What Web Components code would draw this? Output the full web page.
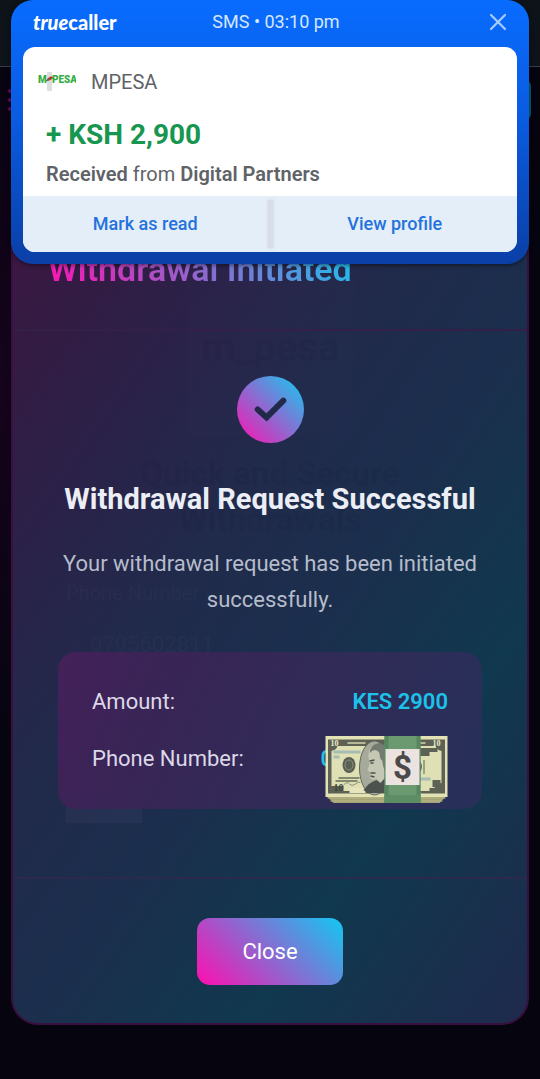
<!DOCTYPE html>
<html lang="en">
<head>
<meta charset="utf-8">
<meta name="viewport" content="width=device-width, initial-scale=1">
<title>Withdrawal Initiated</title>
<style>
  body { margin: 0; background: #05040f; font-family: Roboto, "Liberation Sans", sans-serif; }
</style>
</head>
<body>
<wallet-screen>
  <site-backdrop slot="backdrop"></site-backdrop>
  <wallet-dialog slot="dialog">
    <span slot="title">Withdrawal Initiated</span>
    <success-message>
      <span slot="heading">Withdrawal Request Successful</span>
      Your withdrawal request has been initiated successfully.
    </success-message>
    <detail-card>
      <detail-row label="Amount:">KES 2900</detail-row>
      <detail-row label="Phone Number:">0<cash-stack></cash-stack></detail-row>
    </detail-card>
    <gradient-button slot="footer">Close</gradient-button>
  </wallet-dialog>
  <caller-banner slot="banner"></caller-banner>
</wallet-screen>

<script>
const define = (name, markup, setup) => {
  const template = document.createElement('template');
  template.innerHTML = markup;
  customElements.define(name, class extends HTMLElement {
    constructor() {
      super();
      this.attachShadow({ mode: 'open' }).append(template.content.cloneNode(true));
    }
    connectedCallback() { if (setup) setup(this, this.shadowRoot); }
  });
};

define('wallet-screen', `
  <style>
    :host { display: grid; grid-template-columns: minmax(0, 1fr); min-height: 100vh; }
    ::slotted(*) { grid-area: 1 / 1; }
    ::slotted(wallet-dialog) { align-self: start; margin: 210px 11px 53px; }
    ::slotted(caller-banner) { align-self: start; margin: 0 11px; z-index: 2; }
  </style>
  <slot name="backdrop"></slot><slot name="dialog"></slot><slot name="banner"></slot>`);

define('site-backdrop', `
  <style>
    :host { display: block; background: radial-gradient(ellipse 40px 380px at 0 36%, #16031c, #05040f); }
    .bar { height: 66px; background: #0d1319; border-bottom: 1px solid #3b3f45; }
    .nav { display: flex; justify-content: space-between; align-items: center; padding: 13px 9px 0 8px; }
    .menu { width: 24px; display: grid; gap: 5px; }
    .menu i { height: 4px; border-radius: 2px; background: #6e0a5c; }
    .account { width: 90px; height: 40px; border-radius: 6px; background: #0c5c74; }
  </style>
  <div class="bar"></div>
  <div class="nav"><div class="menu"><i></i><i></i><i></i></div><div class="account"></div></div>`);

define('wallet-dialog', `
  <style>
    :host {
      display: block; position: relative; box-sizing: border-box; overflow: hidden;
      border: 2px solid #3a1040; border-radius: 27px;
      background: linear-gradient(125deg, #401644 0%, #351a42 8%, #2a2249 24%, #212a4b 38%, #1c2e4d 53%, #10384e 74%, #1f2a4c 100%);
    }
    header { padding: 37px 35px 40px; border-bottom: 2px solid #341f48; }
    h1 {
      margin: 0; width: fit-content; font-size: 34px; line-height: 40px; font-weight: 600;
      background: linear-gradient(45deg, #ff10b0, #18c4ee);
      -webkit-background-clip: text; background-clip: text; color: transparent;
    }
    .body { padding: 45px 45px 68px; display: grid; gap: 34px; }
    footer { padding: 39px 39px 38px; border-top: 2px solid #2c2a4c; display: flex; justify-content: center; }
    header, .body, footer { position: relative; }
    page-shadow { position: absolute; inset: 0; }
  </style>
  <page-shadow aria-hidden="true"></page-shadow>
  <header><h1><slot name="title"></slot></h1></header>
  <div class="body"><slot></slot></div>
  <footer><slot name="footer"></slot></footer>`);

define('page-shadow', `
  <style>
    :host { display: block; color: rgba(70, 70, 110, .16); padding: 30px 53px 0; }
    .logo { box-sizing: border-box; width: 168px; height: 194px; padding-top: 82px; margin: 0 auto; background: rgba(50, 60, 100, .07);
      text-align: center; font: 700 40px/48px Roboto, sans-serif; color: rgba(24, 24, 54, .14); }
    .title { margin: 15px 0 0; text-align: center; font-size: 33px; line-height: 46px; font-weight: 700; color: rgba(24, 24, 54, .14); }
    .line { font-size: 20px; line-height: 24px; }
    .name { margin-top: 38px; }
    .value { margin: 28px 0 0 24px; font-size: 22px; }
    .amount { margin-top: 76px; }
    .field { margin-top: 14px; display: flex; align-items: center; gap: 26px; font-size: 22px; }
    .unit { width: 76px; height: 52px; line-height: 52px; text-align: center; background: rgba(70, 70, 110, .2); }
  </style>
  <div class="logo">m_pesa</div>
  <div class="title">Quick and Secure<br>Withdrawals</div>
  <div class="line name">Phone Number</div>
  <div class="line value">0795602811</div>
  <div class="line amount">Amount (KES)</div>
  <div class="field"><span class="unit">KES</span><span>2900</span></div>`);

define('success-message', `
  <style>
    :host { display: flex; flex-direction: column; align-items: center; text-align: center; color: #b6bccb; font-size: 22px; line-height: 36px; }
    svg { width: 67px; height: 67px; }
    h2 { margin: 38px 0 29px; font-size: 29px; line-height: 36px; font-weight: 700; color: #eceef5; white-space: nowrap; }
    p { margin: 0; }
  </style>
  <svg viewBox="0 0 68 68" aria-hidden="true">
    <defs><linearGradient id="g" x1="0" y1="1" x2="1" y2="0"><stop offset=".05" stop-color="#f31ab4"/><stop offset=".95" stop-color="#1cc4f0"/></linearGradient></defs>
    <circle cx="34" cy="34" r="34" fill="url(#g)"/>
    <path d="M21 34 L30 42 L47 25" fill="none" stroke="#212a4b" stroke-width="6" stroke-linecap="round" stroke-linejoin="miter"/>
  </svg>
  <h2><slot name="heading"></slot></h2>
  <p><slot></slot></p>`);

define('detail-card', `
  <style>
    :host { display: grid; gap: 21px; padding: 32px 34px; border-radius: 18px;
      background: linear-gradient(115deg, #46205af0 0%, #3b2457e6 25%, #342a58e6 55%, #28305af0 100%); }
  </style>
  <slot></slot>`);

define('detail-row', `
  <style>
    :host { display: flex; justify-content: space-between; font-size: 22px; line-height: 36px; color: #dcd8e8; }
    .value { display: flex; font-weight: 600; color: #1cc2ea; }
  </style>
  <span class="label"></span><span class="value"><slot></slot></span>`,
  (host, root) => { root.querySelector('.label').textContent = host.getAttribute('label'); });

define('cash-stack', `
  <style>
    :host { display: block; width: 123px; height: 36px; margin-left: -8px; position: relative; }
    svg { position: absolute; right: 0; top: -5px; width: 123px; height: 68px; }
  </style>
  <svg viewBox="0 0 122 68" role="img" aria-label="Cash">
    <path d="M0 59 L8 67 H114 L122 59Z" fill="#a5a477"/>
    <path d="M2 62 H120 M5 65 H117" stroke="#b8b585" stroke-width="1"/>
    <rect width="122" height="61" fill="#e3e2b5"/>
    <rect x="2.500" y="3.500" width="117" height="54" fill="#5d6254"/>
    <path d="M12 10 H110 Q111 14 116 15 V47 Q110 48 109 52 H104 V55 H18 V50 H6 V15 Q11 14 12 10Z" fill="#dfe1b4"/>
    <path d="M22 7 H40 M75 7 H100" stroke="#b6b998" stroke-width="2"/>
    <path d="M8 16 H35 M8 21 H14 M94 43 H105" stroke="#a7bdb4" stroke-width="3"/>
    <ellipse cx="23.500" cy="29" rx="6.500" ry="8" fill="#5b6055"/>
    <ellipse cx="23.500" cy="29" rx="4" ry="5" fill="none" stroke="#8b9080"/>
    <path d="M13 42 H34 M10 45 H32" stroke="#676b5b" stroke-width="1.500"/>
    <path d="M18 49 q4 -4 6 -1 t6 0 t5 -1" fill="none" stroke="#8c907a"/>
    <path d="M24 52 H40 V57 H24Z" fill="#e6e5bc"/>
    <ellipse cx="49" cy="32" rx="15" ry="27" fill="#a6aa9b" stroke="#62675c"/>
    <path d="M43 21 Q42 10 51 9 Q60 7 62 15 V43 L55 47 L51 43 Q45 45 44 40 L45 37 L42 34 L44 28Z" fill="#c3c7b4"/>
    <path d="M44 17 Q45 8 54 7 Q62 9 62 20 V38 Q57 33 57 25 Q54 23 54 17 Q50 11 44 17Z" fill="#747b70"/>
    <path d="M44 25 L49 24 M45 27 L48 27 M45 37 L50 37 M45 40 L49 41" stroke="#4d5249" stroke-width="1.500"/>
    <path d="M38 54 Q44 46 51 44 L55 47 L62 39 V57 H42Z" fill="#4c524d"/>
    <path d="M94 12 H112 V16 H104 V20 H94Z M94 25 Q99 30 94 37Z M98 24 H99 V38 H98Z M107 44 H115 V51 H107Z" fill="#5c6254"/>
    <text x="5" y="10" font-family="Liberation Serif, serif" font-size="8" font-weight="700" fill="#f0eecb">10</text>
    <text x="107" y="10" font-family="Liberation Serif, serif" font-size="8" font-weight="700" fill="#f0eecb">10</text>
    <text x="8" y="55" font-family="Liberation Serif, serif" font-size="10" font-weight="700" fill="#3f453c">10</text>
    <rect x="59" width="36" height="67" fill="#6b9970"/>
    <rect x="59" width="4" height="67" fill="#568560"/><rect x="91" width="4" height="67" fill="#568560"/>
    <path d="M59 59 H95 V67 H59Z" fill="#5c8d65"/>
    <rect x="60" y="13" width="34" height="36" fill="#ebe3df"/>
    <text x="77" y="43" text-anchor="middle" font-family="Roboto, sans-serif" font-size="33" font-weight="700" fill="#4a4a4a">$</text>
  </svg>`);

define('gradient-button', `
  <style>
    :host { display: block; }
    button { display: block; box-sizing: border-box; height: 67px; padding: 0 45px; border: 0; border-radius: 13px;
      font: 400 22px/36px Roboto, "Liberation Sans", sans-serif; color: #fff; background: linear-gradient(45deg, #ff0eb0, #12c8f2); }
  </style>
  <button type="button"><slot></slot></button>`);

define('caller-banner', `
  <style>
    :host { display: block; box-sizing: border-box; padding: 0 12px 12px; border-radius: 22px;
      background: linear-gradient(#086cff, #0a5be0 45%, #0a3fa6); box-shadow: 0 1px 5px #0008; }
    header { display: grid; grid-template-columns: 15fr auto 14fr; align-items: center; box-sizing: border-box; height: 47px; padding: 0 10px 3px; color: #d5e7ff; font-size: 18px; line-height: 20px; }
    .brand { font: 900 20px/24px Lato, sans-serif; color: #fff; }
    .brand i { font-weight: 900; }
    .dismiss { justify-self: end; width: 18px; height: 18px; padding: 0; border: 0; background: none; }
    .dismiss svg, .sender svg { display: block; }
    .card { border-radius: 12px; overflow: hidden; background: #fff; color: #5f6368; }
    .message { padding: 23px 23px 10px; }
    .sender { display: flex; align-items: center; gap: 15px; margin-left: -8px; font-size: 20px; line-height: 24px; }
    .sum { margin: 23px 0 9px; font-size: 28px; line-height: 36px; font-weight: 700; color: #179650; }
    .from { margin: 0; font-size: 20px; line-height: 24px; }
    b { font-weight: 600; }
    .actions { display: grid; grid-template-columns: 1fr 5px 1fr; height: 56px; background: #e4eef8; }
    .actions i { margin: 4px 0; background: #d8dee7; box-shadow: 0 0 3px #ccd2db; }
    .actions button { border: 0; padding: 0; background: none; color: #2472dc; font: 500 18px/20px Roboto, "Liberation Sans", sans-serif; }
  </style>
  <header>
    <span class="brand"><i>true</i>caller</span>
    <span>SMS • 03:10 pm</span>
    <button class="dismiss" type="button" aria-label="Dismiss">
      <svg width="18" height="18" viewBox="0 0 18 18"><path d="M2 2 L16 16 M16 2 L2 16" stroke="#a9ccff" stroke-width="2.200" stroke-linecap="round"/></svg>
    </button>
  </header>
  <div class="card">
    <div class="message">
      <div class="sender">
        <svg width="38" height="20" viewBox="0 0 38 20" role="img" aria-label="M-PESA">
          <rect x="9" y="0" width="5" height="19" rx="1" fill="#dcdedb"/>
          <path d="M8 9 Q11 3 16 5 Q13 9 8 9Z" fill="#d8242c"/>
          <path d="M8 9 Q11 7 15 6" fill="none" stroke="#3a8b3d"/>
          <text y="11" font-family="Roboto, sans-serif" font-size="10" font-weight="900" fill="#35ad45">M</text>
          <text x="14" y="11" font-family="Roboto, sans-serif" font-size="10" font-weight="900" fill="#35ad45">PESA</text>
        </svg>
        <span>MPESA</span>
      </div>
      <p class="sum">+ KSH 2,900</p>
      <p class="from"><b>Received</b> from <b>Digital Partners</b></p>
    </div>
    <div class="actions"><button type="button">Mark as read</button><i></i><button type="button">View profile</button></div>
  </div>`);
</script>
</body>
</html>
